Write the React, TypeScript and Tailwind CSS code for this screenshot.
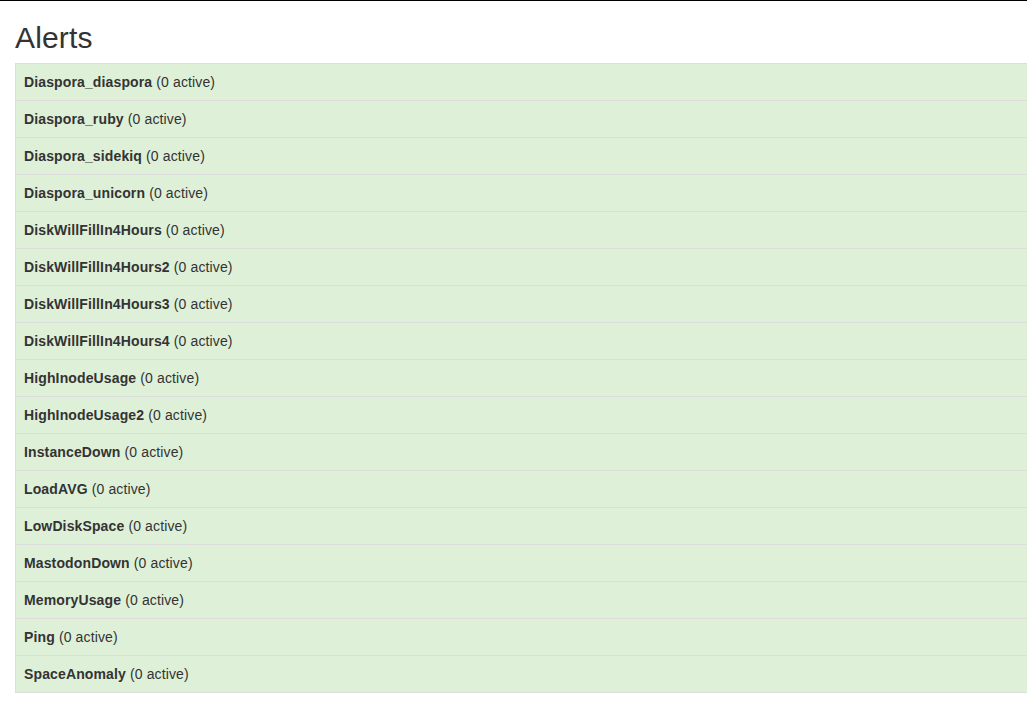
const alerts = [
  "Diaspora_diaspora",
  "Diaspora_ruby",
  "Diaspora_sidekiq",
  "Diaspora_unicorn",
  "DiskWillFillIn4Hours",
  "DiskWillFillIn4Hours2",
  "DiskWillFillIn4Hours3",
  "DiskWillFillIn4Hours4",
  "HighInodeUsage",
  "HighInodeUsage2",
  "InstanceDown",
  "LoadAVG",
  "LowDiskSpace",
  "MastodonDown",
  "MemoryUsage",
  "Ping",
  "SpaceAnomaly",
];

export default function App() {
  return (
    <div className="min-h-screen overflow-hidden bg-white text-[14px] leading-5 tracking-[0.13px] text-[#333] font-['Liberation_Sans',Arial,sans-serif]">
      <div className="h-px bg-black" />
      <div className="pl-[15px]">
        <h2 className="mt-5 mb-[9px] text-[30px] leading-[33px] font-normal tracking-[0.15px]">Alerts</h2>
        <div className="border-b border-[#ddd]">
          {alerts.map((name) => (
            <div
              key={name}
              className="border-t border-l border-[#ddd] bg-[#dff0d8] p-2"
            >
              <b>{name}</b> (0 active)
            </div>
          ))}
        </div>
      </div>
    </div>
  );
}
